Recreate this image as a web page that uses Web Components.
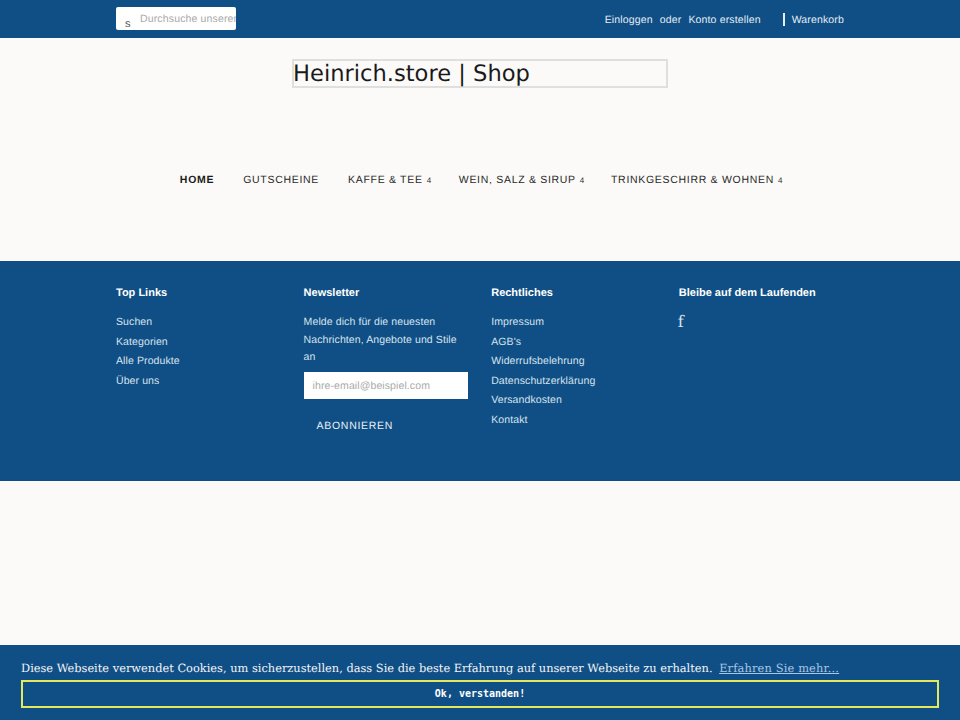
<!DOCTYPE html>
<html lang="de">
<head>
<meta charset="utf-8">
<title>Heinrich.store | Shop</title>
<style>
  html, body { margin: 0; padding: 0; }
  body { background: #fbfaf8; font-family: "Liberation Sans", Arial, sans-serif; text-rendering: geometricPrecision; height: 720px; overflow: hidden; }
</style>
</head>
<body>
<store-topbar></store-topbar>
<store-logo>Heinrich.store | Shop</store-logo>
<store-nav></store-nav>
<store-footer></store-footer>
<cookie-bar></cookie-bar>

<script>
class StoreTopbar extends HTMLElement {
  connectedCallback() {
    this.attachShadow({ mode: 'open' }).innerHTML = `
<style>
  :host {
    display: flex;
    align-items: center;
    justify-content: space-between;
    height: 38px;
    box-sizing: border-box;
    padding: 0 116px;
    background: #104f85;
    color: #e4edf4;
    font-size: 10.5px;
    letter-spacing: 0.15px;
  }
  .search {
    display: flex;
    width: 120px;
    height: 23px;
    margin-top: -1px;
    background: #fff;
    border-radius: 2px;
    overflow: hidden;
    white-space: nowrap;
  }
  .icon { width: 24px; flex: none; color: #555; font-size: 11px; padding-left: 9px; box-sizing: border-box; line-height: 34px; }
  .ph { color: #a9a9a9; line-height: 24px; }
  .right { display: flex; align-items: center; margin-top: 1px; }
  .gap { margin-left: 7px; }
  .cart { display: flex; align-items: center; margin-left: 22px; }
  .bar { width: 2px; height: 13px; background: #e4edf4; margin-right: 7px; }
</style>
<div class="search"><span class="icon">s</span><span class="ph">Durchsuche unseren Shop</span></div>
<div class="right">
  <span>Einloggen</span><span class="gap">oder</span><span class="gap">Konto erstellen</span>
  <span class="cart"><span class="bar"></span><span>Warenkorb</span></span>
</div>`;
  }
}
customElements.define('store-topbar', StoreTopbar);

class StoreLogo extends HTMLElement {
  connectedCallback() {
    this.attachShadow({ mode: 'open' }).innerHTML = `
<style>
  :host { display: block; box-sizing: border-box; padding-top: 21px; height: 60px; }
  div {
    width: 376px;
    height: 29px;
    margin: 0 auto;
    box-sizing: border-box;
    border: 2px solid #dfdfdd;
    font: 22.6px/27px "DejaVu Sans", sans-serif;
    color: #1a1a1a;
    text-indent: -1px;
    white-space: nowrap;
  }
</style>
<div><slot></slot></div>`;
  }
}
customElements.define('store-logo', StoreLogo);

class StoreNav extends HTMLElement {
  connectedCallback() {
    const items = [
      ['HOME', false, true],
      ['GUTSCHEINE', false],
      ['KAFFE & TEE', true],
      ['WEIN, SALZ & SIRUP', true],
      ['TRINKGESCHIRR & WOHNEN', true],
    ];
    const links = items.map(([label, sub, active]) =>
      `<a class="${active ? 'active' : ''} ${sub ? 'sub' : ''}">${label.replace('&', '&amp;')}${sub ? '<i>4</i>' : ''}</a>`).join('');
    this.attachShadow({ mode: 'open' }).innerHTML = `
<style>
  :host {
    display: flex;
    justify-content: center;
    height: 163px;
    box-sizing: border-box;
    padding-top: 75px;
    padding-left: 3px;
    font-size: 10.5px;
    letter-spacing: 0.7px;
    color: #2a2a2a;
    white-space: nowrap;
  }
  a { line-height: 14px; margin-right: 29px; }
  a.sub { margin-right: 26px; }
  a.sub:nth-of-type(3) { margin-right: 27px; }
  a:last-child { margin-right: 0; }
  .active { font-weight: bold; color: #1a1a1a; }
  i { font-style: normal; font-size: 8px; margin-left: 4px; }
</style>
${links}`;
  }
}
customElements.define('store-nav', StoreNav);

class FooterCol extends HTMLElement {
  connectedCallback() {
    this.attachShadow({ mode: 'open' }).innerHTML = `
<style>
  :host { display: block; min-width: 0; }
  h4 { margin: 0 0 10px; font-size: 11px; line-height: 20px; font-weight: bold; color: #fff; }
</style>
<h4>${this.getAttribute('heading')}</h4>
<slot></slot>`;
  }
}
customElements.define('footer-col', FooterCol);

class FooterLinks extends HTMLElement {
  connectedCallback() {
    const items = this.getAttribute('items').split('|');
    this.attachShadow({ mode: 'open' }).innerHTML = `
<style>
  :host { display: block; font-size: 10.5px; letter-spacing: 0.1px; color: #d7e3ee; }
  div { height: 19.5px; line-height: 19.5px; white-space: nowrap; }
</style>
${items.map(t => `<div>${t}</div>`).join('')}`;
  }
}
customElements.define('footer-links', FooterLinks);

class NewsletterForm extends HTMLElement {
  connectedCallback() {
    this.attachShadow({ mode: 'open' }).innerHTML = `
<style>
  :host { display: block; font-size: 10.5px; letter-spacing: 0.1px; color: #d7e3ee; }
  p { margin: 0 0 5px; padding-top: 1px; line-height: 17.5px; }
  .field {
    height: 27px;
    width: 164.5px;
    box-sizing: border-box;
    padding-left: 9px;
    background: #fff;
    color: #a9a9a9;
    line-height: 28px;
  }
  .btn { padding: 20px 0 0 13px; line-height: 14px; letter-spacing: 0.7px; color: #e8eff5; }
</style>
<p>Melde dich für die neuesten Nachrichten, Angebote und Stile an</p>
<div class="field">ihre-email@beispiel.com</div>
<div class="btn">ABONNIEREN</div>`;
  }
}
customElements.define('newsletter-form', NewsletterForm);

class StoreFooter extends HTMLElement {
  connectedCallback() {
    this.attachShadow({ mode: 'open' }).innerHTML = `
<style>
  :host {
    display: grid;
    grid-template-columns: repeat(4, 165px);
    column-gap: 22.6px;
    height: 220px;
    box-sizing: border-box;
    padding: 22px 116px 0;
    background: #104f85;
  }
  .f { font: 16px/20px "DejaVu Serif", serif; color: #d7e3ee; margin: -1px 0 0 -1px; }
</style>
<footer-col heading="Top Links"><footer-links items="Suchen|Kategorien|Alle Produkte|Über uns"></footer-links></footer-col>
<footer-col heading="Newsletter"><newsletter-form></newsletter-form></footer-col>
<footer-col heading="Rechtliches"><footer-links items="Impressum|AGB's|Widerrufsbelehrung|Datenschutzerklärung|Versandkosten|Kontakt"></footer-links></footer-col>
<footer-col heading="Bleibe auf dem Laufenden"><div class="f">f</div></footer-col>`;
  }
}
customElements.define('store-footer', StoreFooter);

class CookieBar extends HTMLElement {
  connectedCallback() {
    this.attachShadow({ mode: 'open' }).innerHTML = `
<style>
  :host {
    position: fixed;
    left: 0;
    right: 0;
    bottom: 0;
    height: 75px;
    box-sizing: border-box;
    padding: 14px 21px 0;
    background: #104f85;
    color: #f2f5f8;
    font: 11.4px/18px "DejaVu Serif", serif;
    white-space: nowrap;
  }
  a { color: #a9c6e6; text-decoration: underline; margin-left: 3px; letter-spacing: 0.15px; }
  button {
    display: block;
    width: 100%;
    height: 28px;
    margin-top: 3px;
    padding: 0 0 1px;
    background: transparent;
    border: 2px solid #e4e85c;
    border-radius: 0;
    color: #fff;
    font: bold 10px "DejaVu Sans Mono", monospace;
  }
</style>
<div>Diese Webseite verwendet Cookies, um sicherzustellen, dass Sie die beste Erfahrung auf unserer Webseite zu erhalten. <a>Erfahren Sie mehr...</a></div>
<button>Ok, verstanden!</button>`;
  }
}
customElements.define('cookie-bar', CookieBar);
</script>
</body>
</html>
